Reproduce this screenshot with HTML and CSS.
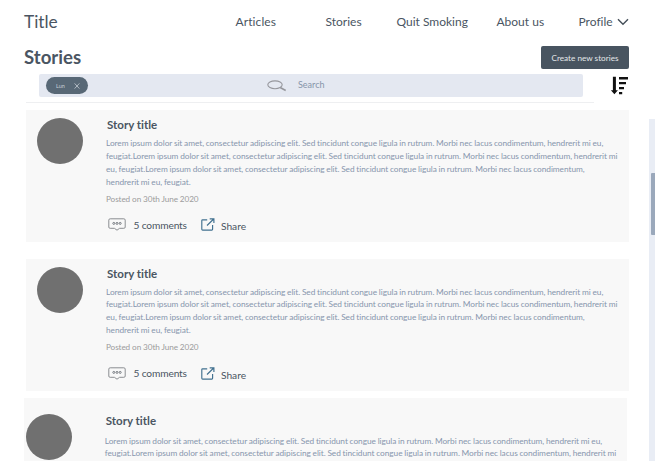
FILE: index.html
```html
<!DOCTYPE html>
<html lang="en">
<head>
<meta charset="utf-8">
<title>Stories</title>
<link rel="stylesheet" href="styles.css">
</head>
<body>
<svg class="defs" width="0" height="0">
  <symbol id="comment" viewBox="0 0 18 13"><path d="M2.2.8h13.6q1.400 0 1.400 1.300v7q0 1.200-1.400 1.200h-4.200L9 12.200l-2.600-1.900H2.200Q.8 10.300.8 9.100v-7Q.8.8 2.200.8Z" fill="none" stroke="#8b8e92" stroke-width="1"/><g fill="none" stroke="#6b7077" stroke-width=".9"><circle cx="5.800" cy="5.400" r="1"/><circle cx="9" cy="5.400" r="1"/><circle cx="12.200" cy="5.400" r="1"/></g></symbol>
  <symbol id="share" viewBox="0 0 14 13"><path d="M6.200 1.800H1.600Q.8 1.800.8 2.600v8.700q0 .8.800.8h9.200q.8 0 .8-.8V6.900M8.700.8h4.200v4.100M12.700 1 6 7.500" fill="none" stroke="#40708f" stroke-width="1.150"/></symbol>
</svg>
<div class="page">
  <header class="nav">
    <div class="brand">Title</div>
    <nav class="links">
      <a class="articles">Articles</a><a class="stories-link">Stories</a><a class="quit">Quit Smoking</a><a class="about">About us</a><a class="profile">Profile</a>
      <svg class="chevron" viewBox="0 0 12 8"><path d="M1 1.200 6 6.300 11 1.200" fill="none" stroke="#454f59" stroke-width="1.400"/></svg>
    </nav>
  </header>
  <div class="heading">
    <h1>Stories</h1>
    <button class="create">Create new stories</button>
  </div>
  <div class="tools">
    <div class="search">
      <span class="chip"><span>Lun</span><svg viewBox="0 0 6 6"><path d="m.6.4 4.800 5.200M5.400.4.6 5.600" stroke="#d5dbe2" stroke-width=".7"/></svg></span>
      <svg class="glass" viewBox="0 0 20 12"><ellipse cx="8" cy="4.800" rx="7.200" ry="3.900" fill="none" stroke="#96979d" stroke-width="1.100"/><path d="m13.200 7.600 5.500 2.800" stroke="#96979d" stroke-width="1.700"/></svg>
      <span class="placeholder">Search</span>
    </div>
    <svg class="sort" viewBox="0 0 18 19"><path d="M2.900.8h3v13.400h2l-3.500 4-3.500-4h2ZM9 1h9v2.600H9Zm0 5h7v2.300H9Zm0 5h5v2.300H9Zm0 5h3.200v2.200H9Z" fill="#111"/></svg>
  </div>
  <div class="rule"></div>
  <main class="feed">
    <article class="card">
      <div class="avatar"></div>
      <div class="body">
        <h2>Story title</h2>
        <p class="text"><span>Lorem ipsum dolor sit amet, consectetur adipiscing elit. Sed tincidunt congue ligula in rutrum. Morbi nec lacus condimentum, hendrerit mi eu,</span> <span>feugiat.Lorem ipsum dolor sit amet, consectetur adipiscing elit. Sed tincidunt congue ligula in rutrum. Morbi nec lacus condimentum, hendrerit mi</span> <span>eu, feugiat.Lorem ipsum dolor sit amet, consectetur adipiscing elit. Sed tincidunt congue ligula in rutrum. Morbi nec lacus condimentum,</span> <span>hendrerit mi eu, feugiat.</span></p>
        <p class="date">Posted on 30th June 2020</p>
        <div class="actions"><svg class="comment"><use href="#comment"/></svg><span class="count">5 comments</span><svg class="share"><use href="#share"/></svg><span class="share-label">Share</span></div>
      </div>
    </article>
    <article class="card">
      <div class="avatar"></div>
      <div class="body">
        <h2>Story title</h2>
        <p class="text"><span>Lorem ipsum dolor sit amet, consectetur adipiscing elit. Sed tincidunt congue ligula in rutrum. Morbi nec lacus condimentum, hendrerit mi eu,</span> <span>feugiat.Lorem ipsum dolor sit amet, consectetur adipiscing elit. Sed tincidunt congue ligula in rutrum. Morbi nec lacus condimentum, hendrerit mi</span> <span>eu, feugiat.Lorem ipsum dolor sit amet, consectetur adipiscing elit. Sed tincidunt congue ligula in rutrum. Morbi nec lacus condimentum,</span> <span>hendrerit mi eu, feugiat.</span></p>
        <p class="date">Posted on 30th June 2020</p>
        <div class="actions"><svg class="comment"><use href="#comment"/></svg><span class="count">5 comments</span><svg class="share"><use href="#share"/></svg><span class="share-label">Share</span></div>
      </div>
    </article>
    <article class="card last">
      <div class="avatar"></div>
      <div class="body">
        <h2>Story title</h2>
        <p class="text"><span>Lorem ipsum dolor sit amet, consectetur adipiscing elit. Sed tincidunt congue ligula in rutrum. Morbi nec lacus condimentum, hendrerit mi eu,</span> <span>feugiat.Lorem ipsum dolor sit amet, consectetur adipiscing elit. Sed tincidunt congue ligula in rutrum. Morbi nec lacus condimentum, hendrerit mi</span></p>
      </div>
    </article>
  </main>
  <div class="track"><div class="thumb"></div></div>
</div>
</body>
</html>
```
FILE: styles.css
```css
* { box-sizing: border-box; }
body { margin: 0; background: #fff; color: #4a5562; font-family: Lato, sans-serif; font-variant-ligatures: none; overflow: hidden; }
h1, h2, p { margin: 0; }
svg { display: block; flex: none; }
.defs { position: absolute; }
.page { position: relative; width: 655px; height: 461px; overflow: hidden; }
.nav { display: flex; height: 43px; padding-left: 24px; align-items: center; }
.brand { width: 211.500px; font-size: 17.300px; line-height: 20px; }
.links { display: flex; align-items: center; font-size: 12px; line-height: 16px; white-space: nowrap; }
.articles { width: 90px; letter-spacing: .1px; }
.stories-link { width: 71px; }
.quit { width: 100px; }
.about { width: 82px; }
.profile { width: 38.500px; }
.chevron { width: 12px; height: 8px; }
.heading { display: flex; height: 31px; padding: 3px 26px 0 24px; justify-content: space-between; }
h1 { font-size: 18.600px; line-height: 22px; }
.create { width: 88px; height: 23px; margin-top: 0; padding: 0; border: 0; border-radius: 2px; background: #485460; color: #e4e7ea; font: 8.200px/22px Lato, sans-serif; font-variant-ligatures: none; white-space: nowrap; }
.tools { display: flex; height: 28px; padding-left: 39px; }
.search { display: flex; width: 544px; height: 23px; padding-left: 7px; align-items: center; border-radius: 2px; background: #e4e8f1; }
.chip { display: flex; width: 42px; height: 17px; padding: 0 8px 0 10px; align-items: center; justify-content: space-between; border-radius: 9px; background: #586876; color: #c8d0d8; font-size: 5.500px; }
.chip svg { width: 6px; height: 6px; }
.glass { width: 20px; height: 12px; margin: 1px 0 0 178.500px; }
.placeholder { margin: -2px 0 0 11.500px; font-size: 9px; line-height: 12px; color: #8795aa; }
.sort { width: 18px; height: 19px; margin: 1.500px 0 0 27px; }
.rule { width: 568px; height: 1px; margin-left: 26px; background: #eeeff1; }
.feed { padding: 7px 0 0 26.400px; }
.card { display: flex; width: 602.500px; height: 132px; margin-bottom: 16.500px; padding: 8px 0 0 11px; background: #f8f8f8; }
.avatar { flex: none; width: 46px; height: 46px; border-radius: 50%; background: #707070; }
.body { margin-left: 22.600px; white-space: nowrap; }
h2 { padding-left: 1px; font-size: 11.500px; line-height: 14px; }
.text { margin-top: 5px; font-size: 8.300px; line-height: 12.900px; letter-spacing: -.05px; word-spacing: -.28px; color: #8796ad; }
.text span { display: block; }
.date { margin-top: 4px; font-size: 8.200px; line-height: 13px; letter-spacing: -.1px; color: #9c9c9c; }
.actions { display: flex; height: 20px; margin: 9px 0 0 2.500px; align-items: center; font-size: 10.200px; line-height: 14px; }
.comment { width: 18px; height: 13px; }
.count { width: 75px; padding-left: 7px; letter-spacing: -.15px; }
.share { width: 14px; height: 13px; }
.share-label { margin: 3px 0 0 5.500px; }
.last { height: 70px; margin: -9px 0 0 -2px; padding: 15.500px 0 0 2px; }
.last .avatar { margin-left: -.6px; }
.last .body { margin-left: 33px; }
.last .text { margin-top: 7px; }
.track { position: absolute; right: 0; top: 119px; width: 6px; height: 342px; padding: 54px 0 0 2px; background: #e9edf5; }
.thumb { width: 4px; height: 62px; border-radius: 1px 0 0 1px; background: #9aa8bb; }
```
